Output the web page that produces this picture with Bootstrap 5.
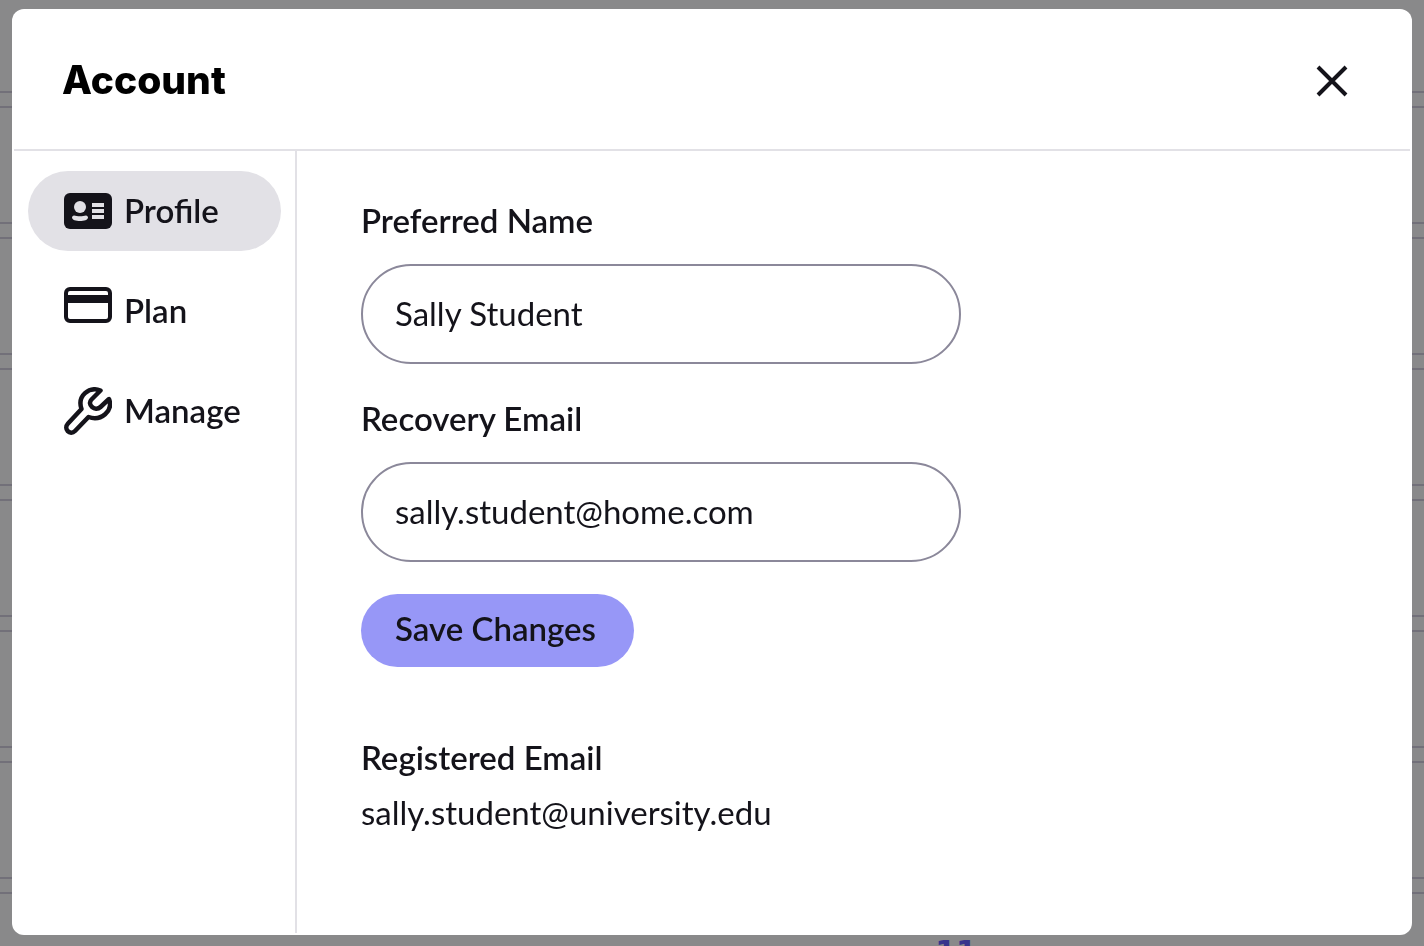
<!DOCTYPE html>
<html lang="en">
<head>
<meta charset="utf-8">
<meta name="viewport" content="width=device-width, initial-scale=1">
<title>Account</title>
<link rel="stylesheet" href="https://cdn.jsdelivr.net/npm/bootstrap@5.3.0/dist/css/bootstrap.min.css">
<style>
  :root { --ink: #14131a; --line: #e2e1e6; --field: #8b889a; --accent: #9797f7; }
  html, body { height: 100%; }
  body { background: #89898a; color: var(--ink); font-family: Lato, "Noto Sans", sans-serif; font-size: 33px; line-height: 40px; overflow: hidden; }
  .backdrop-list { gap: 13px; }
  .backdrop-row { flex: none; height: 118px; border: solid #727079; border-width: 2px 0; }
  .backdrop-row:first-child { height: 93px; border-top: 0; }
  .backdrop-count { padding-top: 38px; padding-left: 488px; color: #37348c; font: 700 30px/40px "DejaVu Sans", sans-serif; }
  .account-dialog { max-width: none; height: calc(100% - 20px); margin: 9px 12px 11px; }
  .account-dialog .modal-content { padding: 2px; border: 0; border-radius: 12px; color: inherit; }
  .account-header { height: 140px; padding: 2px 48px 0; border-bottom: 2px solid var(--line); }
  .account-title { padding-bottom: 2px; font: 800 39px/48px Inter, sans-serif; color: #000; }
  .close-button { width: 60px; height: 60px; }
  .account-nav { width: 283px; padding: 20px 14px; gap: 20px; border-right: 2px solid var(--line); }
  .account-nav .nav-link { height: 80px; padding: 0 36px; gap: 12px; border-radius: 40px; color: var(--ink); font-weight: 600; }
  .account-nav .nav-link span { padding-bottom: 2px; }
  .account-nav .nav-link.active { background: var(--line); color: var(--ink); }
  .card-icon { margin-bottom: 12px; }
  .account-form { padding: 49px 64px; }
  .field-label { font-weight: 600; margin-bottom: 24px; }
  .account-input + .field-label { margin-top: 34px; }
  .account-input { max-width: 600px; height: 100px; padding: 0 32px 2px; border: 2px solid var(--field); border-radius: 50px; font-size: 33px; color: var(--ink); }
  .save-button { height: 73px; margin-top: 32px; padding: 0 38px 3px 34px; border: 0; border-radius: 37px; background: var(--accent); color: var(--ink); font-size: 33px; font-weight: 600; }
  .registered-title { margin: 70px 0 15px; font-size: 33px; line-height: 40px; font-weight: 600; }
</style>
</head>
<body>
<div class="backdrop-list d-flex flex-column h-100 overflow-hidden" aria-hidden="true">
  <div class="backdrop-row"></div><div class="backdrop-row"></div><div class="backdrop-row"></div>
  <div class="backdrop-row"></div><div class="backdrop-row"></div><div class="backdrop-row"></div>
  <div class="backdrop-row"></div>
  <div class="backdrop-row text-center"><div class="backdrop-count">11</div></div>
</div>

<div class="modal d-block" role="dialog" aria-modal="true" aria-labelledby="accountTitle">
  <div class="modal-dialog account-dialog">
    <div class="modal-content h-100">
      <header class="account-header d-flex align-items-center justify-content-between">
        <h1 class="account-title m-0" id="accountTitle">Account</h1>
        <button type="button" class="close-button btn p-0 border-0" aria-label="Close">
          <svg class="d-block m-auto" width="32" height="32" viewBox="0 0 32 32" fill="none" stroke="#14131a" stroke-width="4"><path d="M2 2l28 28M30 2L2 30"/></svg>
        </button>
      </header>
      <div class="d-flex flex-grow-1">
        <nav class="account-nav nav nav-pills flex-column flex-nowrap flex-shrink-0">
          <a class="nav-link active d-flex align-items-center" href="#" aria-current="page">
            <svg width="48" height="36" viewBox="0 0 48 36"><rect width="48" height="36" rx="6" fill="#14131a"/><g fill="#e2e1e6"><circle cx="16" cy="14" r="6"/><path d="M8 24.500c0-1 1-2 2-2 3 1 9 1 12 0 1 0 2 1 2 2 0 2.500-4 3.500-8 3.500s-8-1-8-3.500zM28 10h12v4H28zM28 16h12v4H28zM28 22h12v4H28z"/></g></svg>
            <span>Profile</span>
          </a>
          <a class="nav-link d-flex align-items-center" href="#">
            <svg class="card-icon" width="48" height="36" viewBox="0 0 48 36"><rect x="2" y="2" width="44" height="32" rx="4" fill="none" stroke="#14131a" stroke-width="4"/><path d="M2 8h44v8H2z" fill="#14131a"/></svg>
            <span>Plan</span>
          </a>
          <a class="nav-link d-flex align-items-center" href="#">
            <svg width="48" height="48" viewBox="0 0 48 48" fill="none" stroke="#14131a" stroke-width="4.500" stroke-linejoin="round"><path d="M36.500 3.500C25-1 13 9 17.500 22L4 36.500C-1 42 6 49 11 44L24.500 30C37 34.500 49.500 24 45 12L36.500 20C31 25 22.500 17.500 27.500 12.500Z"/></svg>
            <span>Manage</span>
          </a>
        </nav>
        <form class="account-form flex-grow-1">
          <label class="field-label d-block" for="preferredName">Preferred Name</label>
          <input class="account-input form-control" id="preferredName" type="text" value="Sally Student">
          <label class="field-label d-block" for="recoveryEmail">Recovery Email</label>
          <input class="account-input form-control" id="recoveryEmail" type="email" value="sally.student@home.com">
          <button class="save-button btn d-block" type="button">Save Changes</button>
          <h2 class="registered-title">Registered Email</h2>
          <p class="m-0">sally.student@university.edu</p>
        </form>
      </div>
    </div>
  </div>
</div>
<script src="https://cdn.jsdelivr.net/npm/bootstrap@5.3.0/dist/js/bootstrap.bundle.min.js"></script>
</body>
</html>
